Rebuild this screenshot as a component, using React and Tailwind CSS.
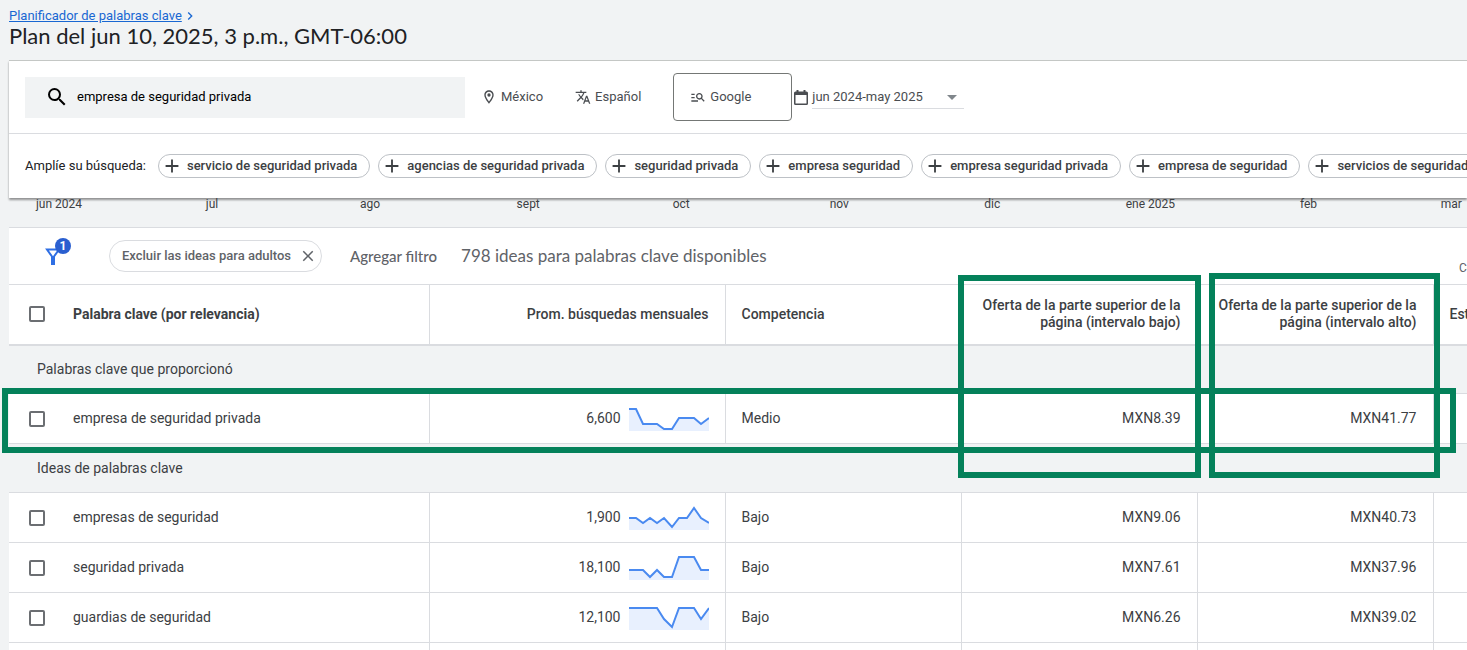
import React from "react";
import {
  MdAdd,
  MdArrowDropDown,
  MdChevronRight,
  MdClose,
  MdManageSearch,
  MdOutlineLocationOn,
  MdSearch,
  MdTranslate,
  MdViewColumn,
} from "react-icons/md";

const suggestions = [
  "servicio de seguridad privada",
  "agencias de seguridad privada",
  "seguridad privada",
  "empresa seguridad",
  "empresa seguridad privada",
  "empresa de seguridad",
  "servicios de seguridad",
];

const PX_PER_DAY = 5.1;

const months = [
  { label: "jun 2024", days: 30 },
  { label: "jul", days: 31 },
  { label: "ago", days: 31 },
  { label: "sept", days: 30 },
  { label: "oct", days: 31 },
  { label: "nov", days: 30 },
  { label: "dic", days: 31 },
  { label: "ene 2025", days: 31 },
  { label: "feb", days: 28 },
  { label: "mar", days: 31 },
];

const providedKeywords = [
  {
    name: "empresa de seguridad privada",
    volume: "6,600",
    trend: "0,4 7,4 14,19 28,19 35,24 43,24 50,13 65,13 72,19 80,13",
    competition: "Medio",
    low: "MXN8.39",
    high: "MXN41.77",
  },
];

const keywordIdeas = [
  {
    name: "empresas de seguridad",
    volume: "1,900",
    trend: "0,14 7,14 14,19 21,14 28,19 35,14 43,23 50,14 58,14 65,4 72,14 80,19",
    competition: "Bajo",
    low: "MXN9.06",
    high: "MXN40.73",
  },
  {
    name: "seguridad privada",
    volume: "18,100",
    trend: "0,16 14,16 21,23 28,16 35,23 43,23 50,3 65,3 72,16 80,16",
    competition: "Bajo",
    low: "MXN7.61",
    high: "MXN37.96",
  },
  {
    name: "guardias de seguridad",
    volume: "12,100",
    trend: "0,4 28,4 35,15 43,23 50,4 65,4 72,15 80,4",
    competition: "Bajo",
    low: "MXN6.26",
    high: "MXN39.02",
  },
];

function CalendarIcon({ className }) {
  return (
    <svg viewBox="0 0 14 15" className={className} fill="currentColor">
      <path d="M2.500 0h2v1.500h5V0h2v1.500h1A1.500 1.500 0 0 1 14 3v10.500A1.500 1.500 0 0 1 12.500 15h-11A1.500 1.500 0 0 1 0 13.500V3A1.500 1.500 0 0 1 1.500 1.500h1zM1.500 5v8.500h11V5z" />
    </svg>
  );
}

function FilterIcon({ className }) {
  return (
    <svg viewBox="0 0 16 17" className={className} fill="none" stroke="currentColor" strokeWidth="2">
      <path d="M2 1.500h12L9 8.500V16H7V8.500z" />
    </svg>
  );
}

function Sparkline({ points }) {
  return (
    <svg viewBox="0 0 80 26" className="h-[26px] w-20">
      <polygon points={`0,26 ${points} 80,26`} fill="#e8f0fe" />
      <polyline points={points} fill="none" stroke="#4a8af0" strokeWidth="2" />
    </svg>
  );
}

function Checkbox({ label }) {
  return (
    <input
      type="checkbox"
      aria-label={label}
      className="block size-4 appearance-none rounded-xs border-2 border-[#6b6e72] bg-white checked:bg-[#1a73e8]"
    />
  );
}

function SectionRow({ children }) {
  return (
    <tr className="border-b border-[#dadce0] bg-[#f1f3f4]">
      <td colSpan={7} className="h-[49px] pl-7 text-left">
        {children}
      </td>
    </tr>
  );
}

function KeywordRow({ keyword }) {
  return (
    <tr className="h-[50px] border-b border-[#dadce0] bg-white">
      <td className="pl-5">
        <Checkbox label={`Seleccionar ${keyword.name}`} />
      </td>
      <td className="border-r border-[#dadce0] pb-0.5 pl-2">{keyword.name}</td>
      <td className="border-r border-[#dadce0] pr-4 pb-0.5">
        <div className="flex items-center justify-end gap-2">
          {keyword.volume}
          <Sparkline points={keyword.trend} />
        </div>
      </td>
      <td className="border-r border-[#dadce0] pb-0.5 pl-4">{keyword.competition}</td>
      <td className="border-r border-[#dadce0] pr-4 pb-0.5 text-right">{keyword.low}</td>
      <td className="border-r border-[#dadce0] pr-4 pb-0.5 text-right">{keyword.high}</td>
      <td />
    </tr>
  );
}

function Toolbar() {
  return (
    <div className="flex h-[73px] items-center border-b border-[#dadce0] pl-4 text-[13px] text-[#4a4d51]">
      <label className="flex h-[41px] w-[440px] items-center gap-2 bg-[#f1f3f4] pl-5 text-black">
        <MdSearch className="size-6" />
        <input
          type="text"
          aria-label="Palabras clave"
          defaultValue="empresa de seguridad privada"
          className="flex-1 bg-transparent outline-none"
        />
      </label>
      <button className="ml-4 flex items-center gap-1">
        <MdOutlineLocationOn className="size-4" />
        México
      </button>
      <button className="ml-8 flex items-center gap-1">
        <MdTranslate className="size-4" />
        Español
      </button>
      <button className="ml-8 flex h-12 w-[119px] items-center gap-1 rounded-sm border border-[#747775] pl-4">
        <MdManageSearch className="size-4" />
        Google
      </button>
      <button className="flex items-center gap-1 pl-0.5">
        <CalendarIcon className="h-[15px] w-[14px]" />
        <span className="flex h-6 w-[152px] items-center justify-between border-b border-[#dadce0]">
          jun 2024-may 2025
          <MdArrowDropDown className="size-6 text-[#80868b]" />
        </span>
      </button>
    </div>
  );
}

function Suggestions() {
  return (
    <div className="flex h-16 items-center gap-2 pl-4 text-[13px] whitespace-nowrap">
      <span className="mr-1 text-[#202124]">Amplíe su búsqueda:</span>
      {suggestions.map((text) => (
        <button
          key={text}
          className="flex h-6 shrink-0 items-center gap-1 rounded-full border border-[#bdc1c6] pr-3 pl-0.5 font-medium text-[#3c4043]"
        >
          <MdAdd className="size-[22px]" />
          {text}
        </button>
      ))}
    </div>
  );
}

function MonthAxis() {
  return (
    <div className="flex h-[29px] pl-[50px] text-xs leading-3 text-[#3c4043]">
      {months.map(({ label, days }) => (
        <div key={label} className="shrink-0" style={{ width: days * PX_PER_DAY }}>
          <span className="inline-block -translate-x-1/2 whitespace-nowrap">{label}</span>
        </div>
      ))}
    </div>
  );
}

function FilterBar() {
  return (
    <div className="flex h-14 w-[1504px] items-center text-[#5f6368]">
      <button aria-label="Filtros" className="relative ml-9 text-[#2f6fe4]">
        <FilterIcon className="h-[17px] w-4" />
        <span className="absolute -top-2.5 left-2.5 flex size-4 items-center justify-center rounded-full bg-[#2a5fd0] text-xs font-bold text-white">
          1
        </span>
      </button>
      <button className="ml-12 flex h-8 items-center gap-2 rounded-full border border-[#dadce0] pr-1 pl-3 text-[13px] font-medium">
        Excluir las ideas para adultos
        <MdClose className="size-[18px]" />
      </button>
      <button className="ml-7 font-[Lato,sans-serif] text-[15px] font-medium">Agregar filtro</button>
      <p className="ml-6 font-[Lato,sans-serif] text-[17px]">798 ideas para palabras clave disponibles</p>
      <button className="ml-auto flex flex-col items-center text-xs">
        <MdViewColumn className="size-6" />
        Columnas
      </button>
    </div>
  );
}

function KeywordTable() {
  return (
    <table className="w-max table-fixed border-collapse text-sm text-[#3c4043]">
      <colgroup>
        <col className="w-14" />
        <col className="w-[364px]" />
        <col className="w-[296px]" />
        <col className="w-[236px]" />
        <col className="w-[236px]" />
        <col className="w-[236px]" />
        <col className="w-[236px]" />
      </colgroup>
      <thead>
        <tr className="h-[60px] border-t border-b-2 border-[#dadce0] bg-white leading-[17px]">
          <th className="pl-5">
            <Checkbox label="Seleccionar todas" />
          </th>
          <th className="border-r border-[#dadce0] pl-2 text-left font-bold">Palabra clave (por relevancia)</th>
          <th className="border-r border-[#dadce0] pr-4 text-right font-medium">Prom. búsquedas mensuales</th>
          <th className="border-r border-[#dadce0] pl-4 text-left font-medium">Competencia</th>
          <th className="border-r border-[#dadce0] pr-4 pl-4 text-right font-medium">
            Oferta de la parte superior de la página (intervalo bajo)
          </th>
          <th className="border-r border-[#dadce0] pr-4 pl-4 text-right font-medium">
            Oferta de la parte superior de la página (intervalo alto)
          </th>
          <th className="pl-4 text-left font-medium">Estado de la cuenta</th>
        </tr>
      </thead>
      <tbody>
        <SectionRow>Palabras clave que proporcionó</SectionRow>
        {providedKeywords.map((keyword) => (
          <KeywordRow key={keyword.name} keyword={keyword} />
        ))}
        <SectionRow>Ideas de palabras clave</SectionRow>
        {keywordIdeas.map((keyword) => (
          <KeywordRow key={keyword.name} keyword={keyword} />
        ))}
        <tr className="h-[50px] bg-white">
          <td />
          <td className="border-r border-[#dadce0]" />
          <td className="border-r border-[#dadce0]" />
          <td className="border-r border-[#dadce0]" />
          <td className="border-r border-[#dadce0]" />
          <td className="border-r border-[#dadce0]" />
          <td />
        </tr>
      </tbody>
    </table>
  );
}

export default function App() {
  return (
    <div className="h-screen overflow-hidden bg-[#f1f3f4] font-[Roboto,sans-serif]">
      <header className="flex h-[60px] flex-col pt-2 pl-[9px]">
        <nav className="flex items-center text-[13px] leading-4 text-[#1967d2]">
          <a href="#" className="underline">
            Planificador de palabras clave
          </a>
          <MdChevronRight className="size-4" />
        </nav>
        <h1 className="font-[Lato,sans-serif] text-[22px] leading-6 text-[#202124]">
          Plan del jun 10, 2025, 3 p.m., GMT-06:00
        </h1>
      </header>

      <main className="pl-[9px]">
        <section className="relative overflow-hidden border-t border-[#c4c7c5] bg-white shadow-[0_2px_2px_rgba(0,0,0,0.4)]">
          <Toolbar />
          <Suggestions />
        </section>

        <MonthAxis />

        <section className="relative border-t border-[#dadce0] bg-white">
          <FilterBar />
          <KeywordTable />
          <div className="pointer-events-none absolute top-[47px] left-[949px] h-[203px] w-[243px] border-6 border-[#04815a]" />
          <div className="pointer-events-none absolute top-[45px] left-[1200px] h-[205px] w-[231px] border-6 border-[#04815a]" />
          <div className="pointer-events-none absolute top-[160px] -left-[7px] h-[65px] w-[1454px] border-6 border-[#04815a]" />
        </section>
      </main>
    </div>
  );
}
